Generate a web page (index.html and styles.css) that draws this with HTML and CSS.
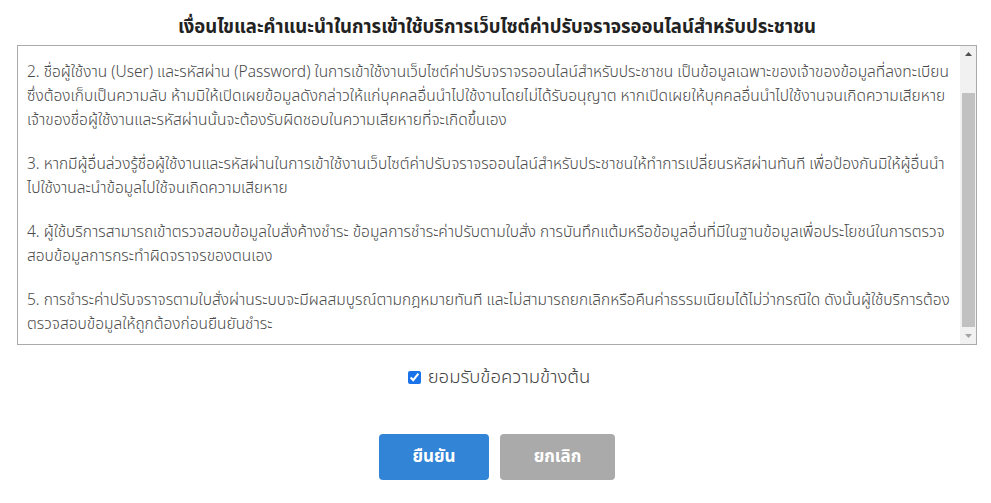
FILE: index.html
```html
<!DOCTYPE html>
<html lang="th">
<head>
<meta charset="utf-8">
<title>เงื่อนไขและคำแนะนำ</title>
<link rel="stylesheet" href="styles.css">
</head>
<body>
<main class="page">
  <h1 class="title">เงื่อนไขและคำแนะนำในการเข้าใช้บริการเว็บไซต์ค่าปรับจราจรออนไลน์สำหรับประชาชน</h1>
  <div class="terms">
    <div class="terms-view" id="terms">
      <div class="terms-spacer" aria-hidden="true"></div>
      <p>2. ชื่อผู้ใช้งาน (User) และรหัสผ่าน (Password) ในการเข้าใช้งานเว็บไซต์ค่าปรับจราจรออนไลน์สำหรับประชาชน เป็นข้อมูลเฉพาะของเจ้าของข้อมูลที่ลงทะเบียน ซึ่งต้องเก็บเป็นความลับ ห้ามมิให้เปิดเผยข้อมูลดังกล่าวให้แก่บุคคลอื่นนำไปใช้งานโดยไม่ได้รับอนุญาต หากเปิดเผยให้บุคคลอื่นนำไปใช้งานจนเกิดความเสียหาย เจ้าของชื่อผู้ใช้งานและรหัสผ่านนั้นจะต้องรับผิดชอบในความเสียหายที่จะเกิดขึ้นเอง</p>
      <p>3. หากมีผู้อื่นล่วงรู้ชื่อผู้ใช้งานและรหัสผ่านในการเข้าใช้งานเว็บไซต์ค่าปรับจราจรออนไลน์สำหรับประชาชนให้ทำการเปลี่ยนรหัสผ่านทันที เพื่อป้องกันมิให้ผู้อื่นนำไปใช้งานละนำข้อมูลไปใช้จนเกิดความเสียหาย</p>
      <p>4. ผู้ใช้บริการสามารถเข้าตรวจสอบข้อมูลใบสั่งค้างชำระ ข้อมูลการชำระค่าปรับตามใบสั่ง การบันทึกแต้มหรือข้อมูลอื่นที่มีในฐานข้อมูลเพื่อประโยชน์ในการตรวจสอบข้อมูลการกระทำผิดจราจรของตนเอง</p>
      <p>5. การชำระค่าปรับจราจรตามใบสั่งผ่านระบบจะมีผลสมบูรณ์ตามกฎหมายทันที และไม่สามารถยกเลิกหรือคืนค่าธรรมเนียมได้ไม่ว่ากรณีใด ดังนั้นผู้ใช้บริการต้องตรวจสอบข้อมูลให้ถูกต้องก่อนยืนยันชำระ</p>
    </div>
    <div class="scrollbar" aria-hidden="true">
      <div class="sb-btn">
        <svg width="7" height="4" viewBox="0 0 7 4"><polygon points="0,4 7,4 3.5,0" fill="#505050"/></svg>
      </div>
      <div class="sb-track"><div class="sb-thumb"></div></div>
      <div class="sb-btn">
        <svg width="7" height="4" viewBox="0 0 7 4"><polygon points="0,0 7,0 3.5,4" fill="#a3a3a3"/></svg>
      </div>
    </div>
  </div>
  <label class="accept">
    <input type="checkbox" class="accept-box" checked>
    <span>ยอมรับข้อความข้างต้น</span>
  </label>
  <div class="actions">
    <button type="button" class="btn btn-primary">ยืนยัน</button>
    <button type="button" class="btn btn-muted">ยกเลิก</button>
  </div>
</main>
<script src="script.js"></script>
</body>
</html>
```

FILE: styles.css
```css
* { box-sizing: border-box; }

html, body {
  margin: 0;
  padding: 0;
  background: #fff;
}

body {
  font-family: "Noto Sans Thai", "Noto Sans", "DejaVu Sans", sans-serif;
  color: #444;
}

.page {
  padding: 0 14px 0 17px;
  display: flex;
  flex-direction: column;
}

.title {
  margin: 0;
  padding-top: 13px;
  height: 45px;
  font-size: 18.5px;
  line-height: 28px;
  font-weight: 700;
  color: #222;
  text-align: center;
}

.terms {
  height: 300px;
  border: 1px solid #aaa;
  display: flex;
}

.terms-view {
  flex: 1;
  overflow: hidden;
  padding: 15px 10px 9px 9px;
  font-size: 15.5px;
  font-weight: 300;
  line-height: 24px;
  color: #4a4a4a;
}

.terms-spacer {
  height: 41px;
}

.terms-view p {
  margin: 0 0 20px;
}

.terms-view p:last-child {
  margin-bottom: 0;
}

.scrollbar {
  width: 16px;
  flex: none;
  display: flex;
  flex-direction: column;
  background: #f1f1f1;
}

.sb-btn {
  height: 16px;
  display: flex;
  align-items: center;
  justify-content: center;
}

.sb-btn svg {
  display: block;
}

.sb-track {
  flex: 1;
  padding: 31px 1px 0 2px;
}

.sb-thumb {
  height: 234px;
  background: #c1c1c1;
}

.accept {
  margin-top: 20px;
  display: flex;
  align-items: center;
  justify-content: center;
  gap: 7px;
  padding-left: 4px;
  font-size: 18.5px;
  font-weight: 300;
  line-height: 24px;
  color: #444;
}

.accept-box {
  width: 13px;
  height: 13px;
  margin: 0;
  accent-color: #1a73e8;
}

.actions {
  margin-top: 45px;
  display: flex;
  justify-content: center;
  gap: 11px;
}

.btn {
  height: 46px;
  border: 0;
  border-radius: 4px;
  color: #fff;
  font-family: inherit;
  font-size: 17px;
  font-weight: 700;
}

.btn-primary {
  width: 110px;
  background: #3184d6;
}

.btn-muted {
  width: 115px;
  background: #aaaaaa;
}
```

FILE: script.js
```js
document.getElementById('terms').scrollTop = 41;
```
